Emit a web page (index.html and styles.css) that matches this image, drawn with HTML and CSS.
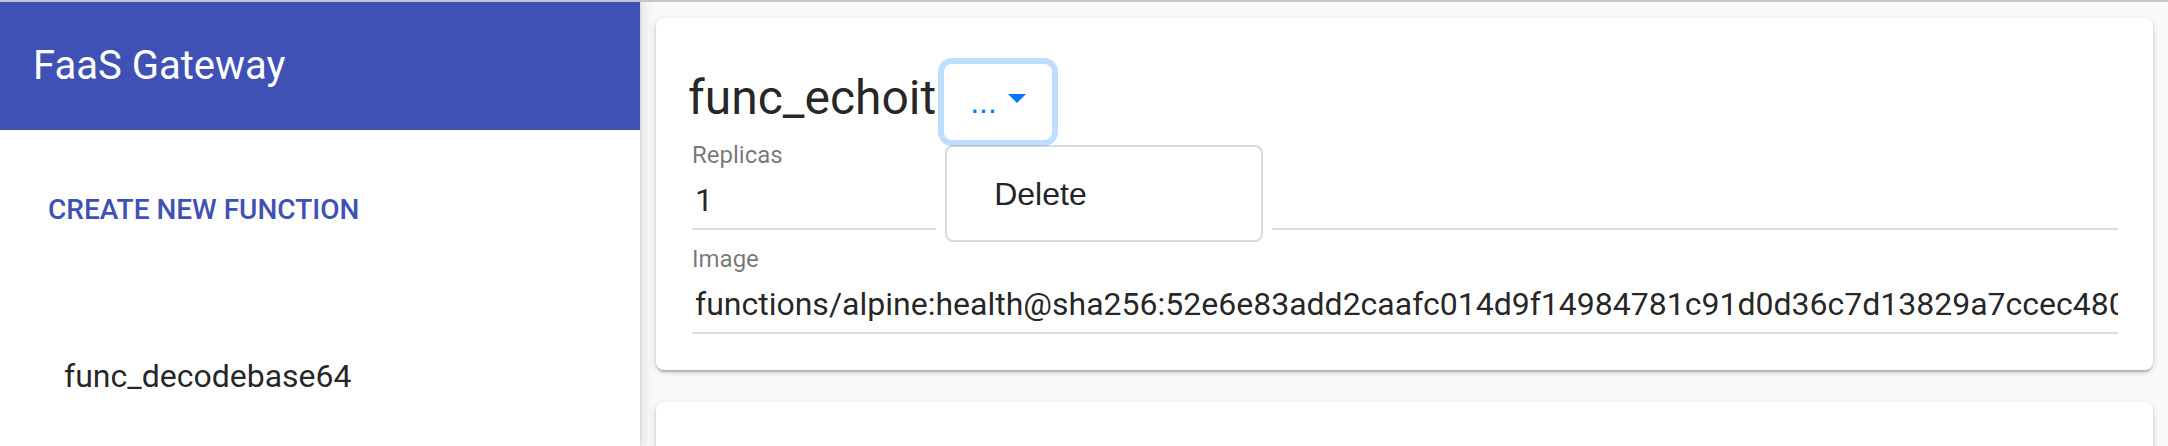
FILE: index.html
```html
<!DOCTYPE html>
<html lang="en">
<head>
  <meta charset="UTF-8" />
  <meta name="viewport" content="width=device-width, initial-scale=1.0" />
  <title>FaaS Gateway</title>
  <link rel="stylesheet" href="styles.css">
</head>
<body>
  <div class="app">
    <aside class="drawer">
      <div class="drawer-head">
        <h1>FaaS Gateway</h1>
      </div>
      <div class="drawer-actions">
        <button class="create-btn">Create new function</button>
      </div>
      <ul class="fn-list">
        <li>func_decodebase64</li>
      </ul>
    </aside>

    <main class="content">
      <section class="card">
        <div class="card-head">
          <h2>func_echoit</h2>
          <div class="dropdown">
            <button class="dd-toggle">...</button>
            <div class="dd-menu">
              <a class="dd-item" href="#">Delete</a>
            </div>
          </div>
        </div>

        <div class="field">
          <label>Replicas</label>
          <div class="field-value">1</div>
        </div>
        <div class="field">
          <label>Image</label>
          <div class="field-value">functions/alpine:health@sha256:52e6e83add2caafc014d9f14984781c91d0d36c7d13829a7ccec4806</div>
        </div>
      </section>

      <section class="card card-empty"></section>
    </main>
  </div>
</body>
</html>
```

FILE: styles.css
```css
* {
  margin: 0;
  padding: 0;
  box-sizing: border-box;
}

html, body {
  height: 100%;
  overflow: hidden;
}

body {
  font-family: Roboto, 'Liberation Sans', sans-serif;
  background: #fafafa;
  border-top: 2px solid #c6c6c6;
  color: rgba(0, 0, 0, 0.87);
}

.app {
  display: flex;
  height: 100%;
}

/* 左側選單 */
.drawer {
  position: relative;
  z-index: 3;
  width: 640px;
  flex-shrink: 0;
  background: #fff;
  box-shadow: 2px 0 14px rgba(0, 0, 0, 0.14), 1px 0 2px rgba(0, 0, 0, 0.08);
}

.drawer-head {
  height: 128px;
  display: flex;
  align-items: center;
  padding-left: 33px;
  background: #3f51b5;
}

.drawer-head h1 {
  font-size: 40px;
  line-height: 40px;
  font-weight: 400;
  color: #fff;
}

.drawer-actions {
  padding: 60px 0 0 16px;
}

.create-btn {
  background: none;
  border: none;
  padding: 0 32px;
  font-family: Roboto, sans-serif;
  font-size: 28px;
  line-height: 40px;
  font-weight: 500;
  text-transform: uppercase;
  color: #3f51b5;
  cursor: pointer;
}

.fn-list {
  list-style: none;
  padding: 122px 0 0 64px;
}

.fn-list li {
  font-size: 32px;
  line-height: 48px;
}

/* 主內容 */
.content {
  flex: 1;
  min-width: 0;
  padding: 16px 15px 0 16px;
}

.card {
  background: #fff;
  border-radius: 8px;
  padding: 46px 35px 36px 36px;
  box-shadow: 0 2px 6px rgba(0, 0, 0, 0.18), 0 2px 2px rgba(0, 0, 0, 0.12), 0 4px 2px -2px rgba(0, 0, 0, 0.1);
}

.card-empty {
  margin-top: 32px;
  height: 60px;
}

.card-head {
  display: flex;
  align-items: flex-start;
  height: 76px;
  margin-bottom: 3px;
}

.card-head h2 {
  font-size: 48px;
  line-height: 56px;
  font-weight: 400;
  margin: 6px 0 0 -4px;
}

.dropdown {
  position: relative;
  margin-left: 8px;
}

.dd-toggle {
  position: relative;
  z-index: 2;
  display: block;
  padding: 12px 24px;
  border: 2px solid transparent;
  border-radius: 8px;
  background: #fff;
  font-family: 'Liberation Sans', Arial, sans-serif;
  font-size: 32px;
  line-height: 48px;
  color: #007bff;
  box-shadow: 0 0 0 6px rgba(0, 123, 255, 0.25);
  cursor: pointer;
}

.dd-toggle::after {
  content: "";
  display: inline-block;
  margin-left: 11px;
  vertical-align: 10px;
  border-top: 9px solid;
  border-left: 9px solid transparent;
  border-right: 9px solid transparent;
}

.dd-menu {
  position: absolute;
  z-index: 1;
  top: 81px;
  left: 1px;
  width: 318px;
  padding: 15px 0 14px;
  background: #fff;
  border: 2px solid rgba(0, 0, 0, 0.15);
  border-radius: 8px;
  box-shadow: 0 0 0 9px #fff;
}

.dd-item {
  display: block;
  padding: 8px 47px;
  font-family: 'Liberation Sans', Arial, sans-serif;
  font-size: 32px;
  line-height: 48px;
  color: #212529;
  text-decoration: none;
}

.field + .field {
  margin-top: 17px;
}

.field label {
  display: block;
  font-size: 24px;
  line-height: 24px;
  color: rgba(0, 0, 0, 0.54);
}

.field-value {
  margin-top: 14px;
  padding: 0 4px 9px 3px;
  font-size: 32px;
  line-height: 38px;
  white-space: nowrap;
  overflow: hidden;
  border-bottom: 2px solid #dcdcdc;
}
```
